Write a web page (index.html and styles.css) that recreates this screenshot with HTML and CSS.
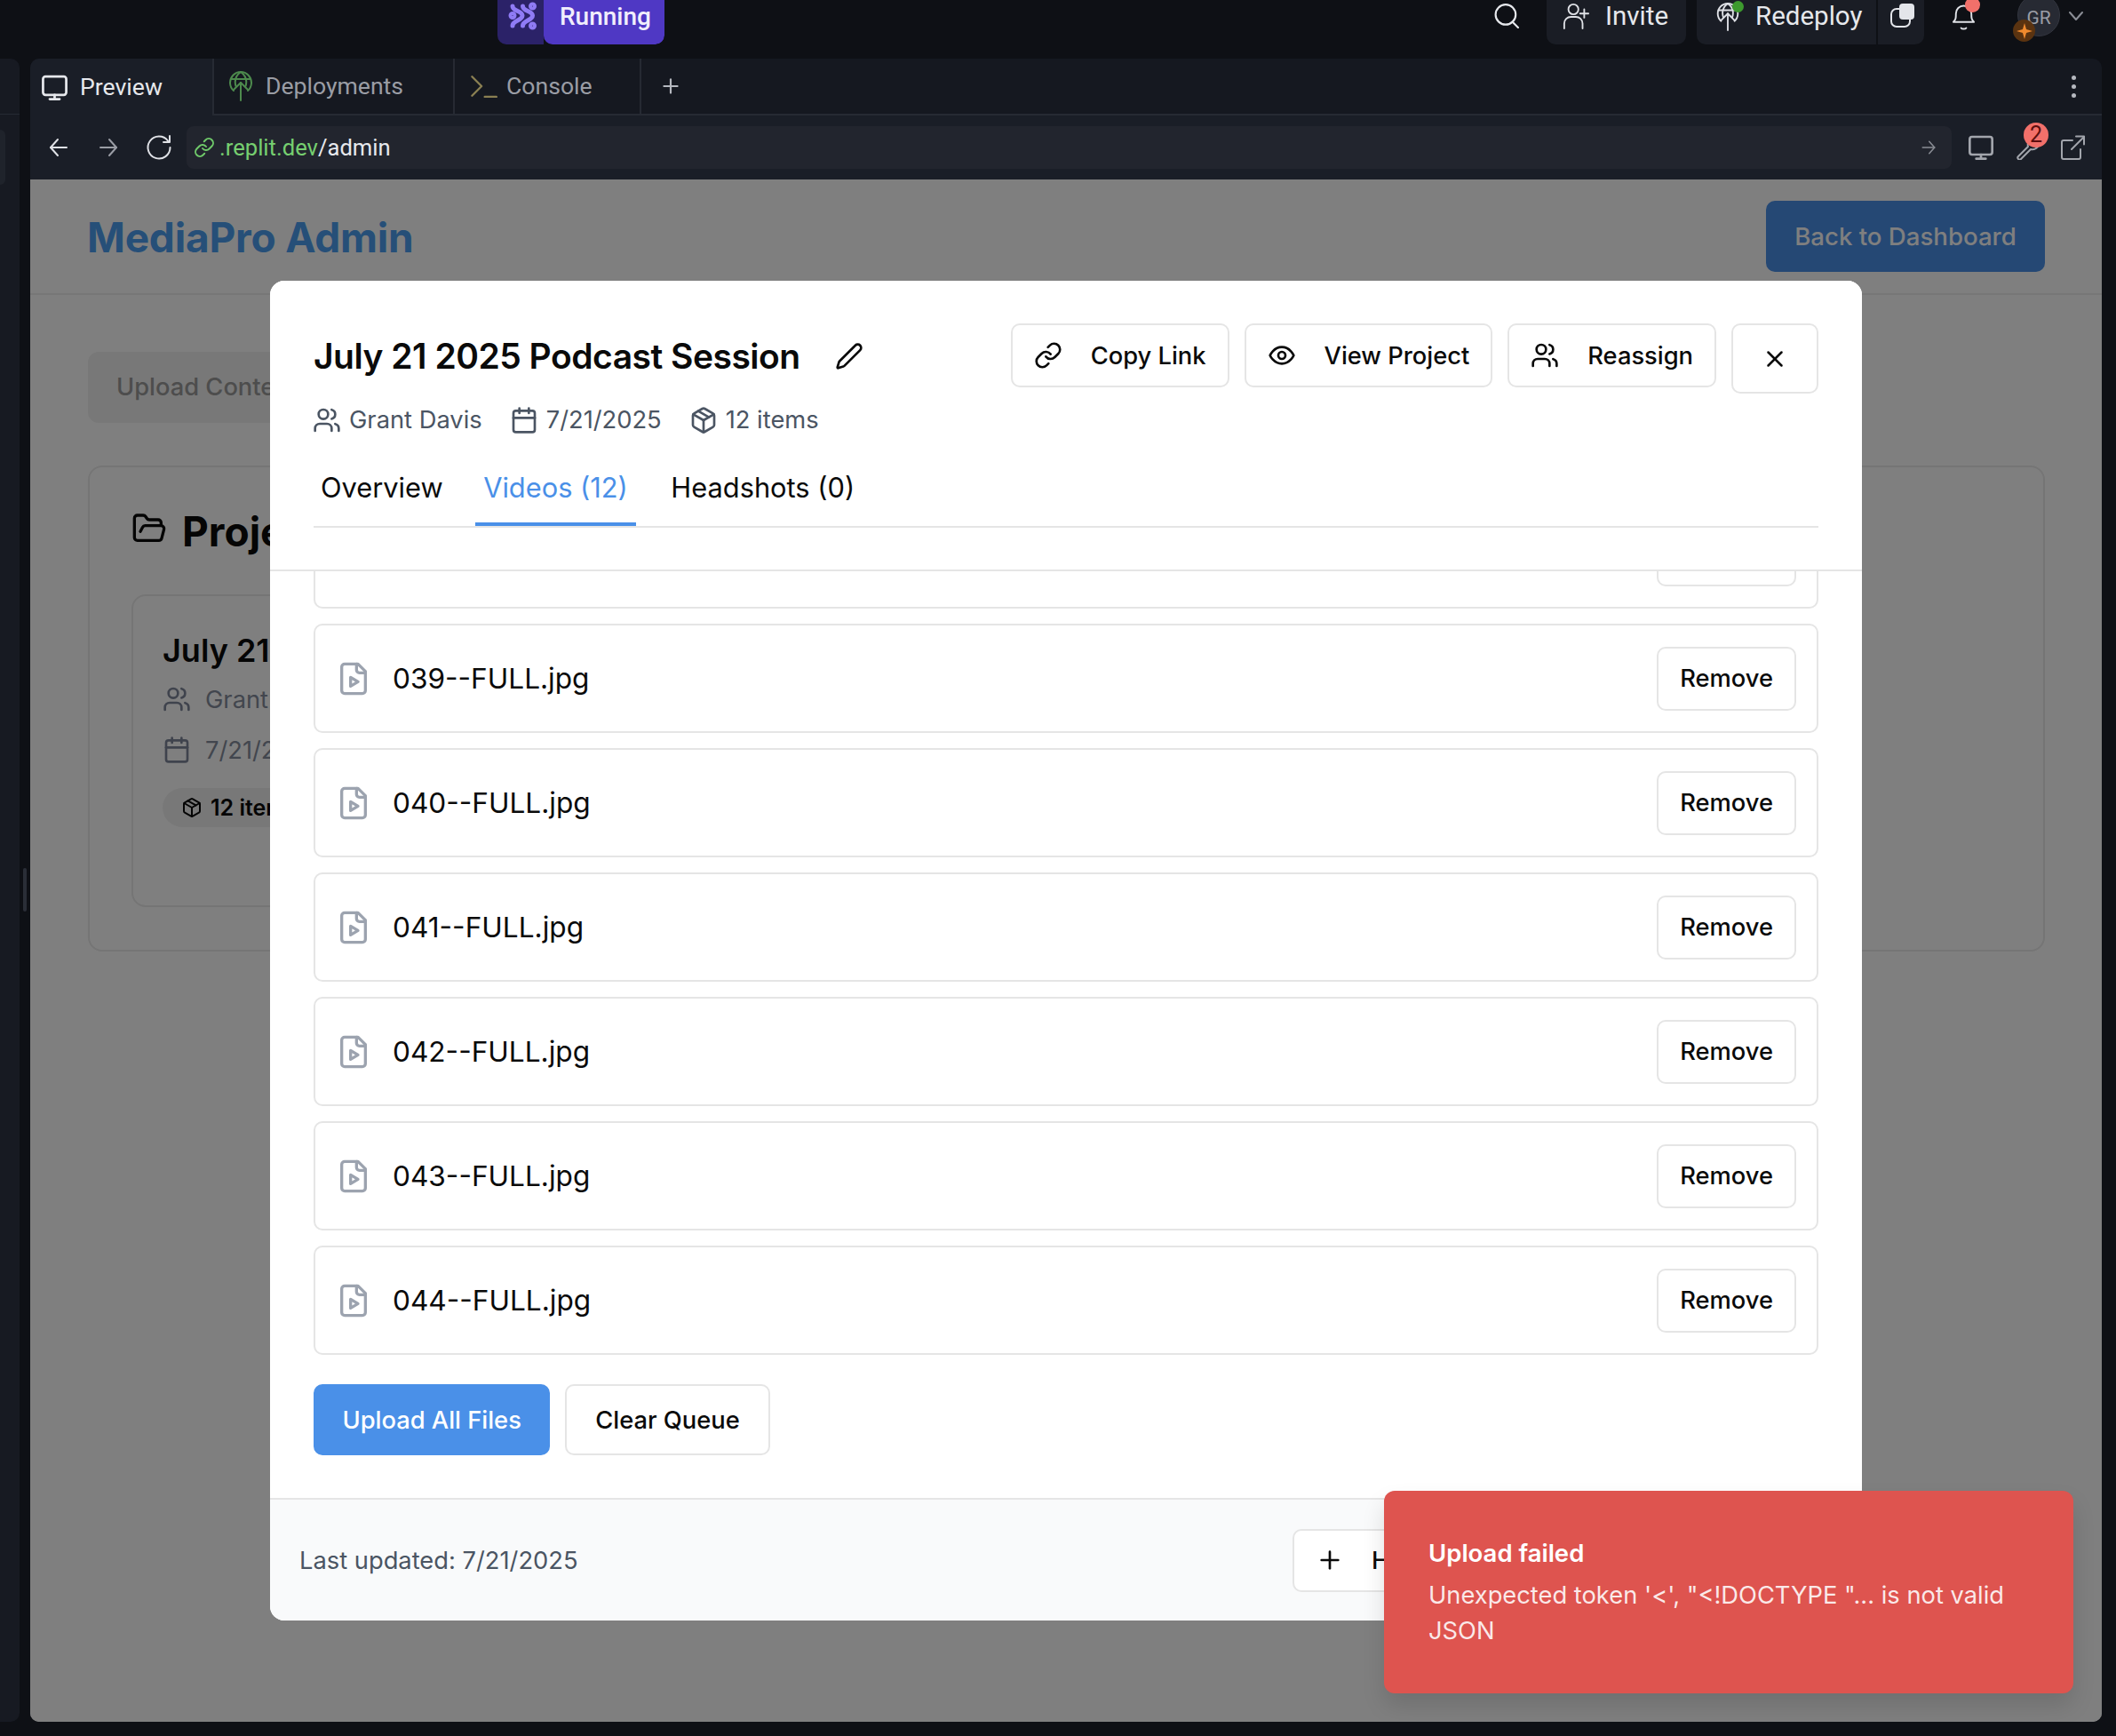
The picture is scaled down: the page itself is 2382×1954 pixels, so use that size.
FILE: index.html
```html
<!DOCTYPE html>
<html lang="en">
  <head>
    <meta charset="utf-8" />
    <title>MediaPro Admin</title>
    <link rel="stylesheet" href="styles.css">
  </head>
  <body>
    <!-- shared icons -->
    <svg class="sprite" xmlns="http://www.w3.org/2000/svg">
      <symbol id="i-users" viewBox="0 0 24 24"><path d="M16 21v-2a4 4 0 0 0-4-4H6a4 4 0 0 0-4 4v2"/><circle cx="9" cy="7" r="4"/><path d="M22 21v-2a4 4 0 0 0-3-3.87"/><path d="M16 3.13a4 4 0 0 1 0 7.75"/></symbol>
      <symbol id="i-calendar" viewBox="0 0 24 24"><path d="M8 2v4"/><path d="M16 2v4"/><rect width="18" height="18" x="3" y="4" rx="2"/><path d="M3 10h18"/></symbol>
      <symbol id="i-package" viewBox="0 0 24 24"><path d="m7.5 4.27 9 5.15"/><path d="M21 8a2 2 0 0 0-1-1.73l-7-4a2 2 0 0 0-2 0l-7 4A2 2 0 0 0 3 8v8a2 2 0 0 0 1 1.73l7 4a2 2 0 0 0 2 0l7-4A2 2 0 0 0 21 16Z"/><path d="m3.3 7 8.7 5 8.7-5"/><path d="M12 22V12"/></symbol>
      <symbol id="i-pencil" viewBox="0 0 24 24"><path d="M21.174 6.812a1 1 0 0 0-3.986-3.987L3.842 16.174a2 2 0 0 0-.5.83l-1.321 4.352a.5.5 0 0 0 .623.622l4.353-1.32a2 2 0 0 0 .83-.497z"/></symbol>
      <symbol id="i-link" viewBox="0 0 24 24"><path d="M10 13a5 5 0 0 0 7.54.54l3-3a5 5 0 0 0-7.07-7.07l-1.72 1.71"/><path d="M14 11a5 5 0 0 0-7.54-.54l-3 3a5 5 0 0 0 7.07 7.07l1.71-1.71"/></symbol>
      <symbol id="i-eye" viewBox="0 0 24 24"><path d="M2 12s3-7 10-7 10 7 10 7-3 7-10 7-10-7-10-7Z"/><circle cx="12" cy="12" r="3"/></symbol>
      <symbol id="i-x" viewBox="0 0 24 24"><path d="M18 6 6 18"/><path d="m6 6 12 12"/></symbol>
      <symbol id="i-plus" viewBox="0 0 24 24"><path d="M5 12h14"/><path d="M12 5v14"/></symbol>
      <symbol id="i-file" viewBox="0 0 24 24"><path d="M15 2H6a2 2 0 0 0-2 2v16a2 2 0 0 0 2 2h12a2 2 0 0 0 2-2V7Z"/><path d="M14 2v4a2 2 0 0 0 2 2h4"/><path d="m10 11 5 3-5 3v-6Z"/></symbol>
      <symbol id="i-folder" viewBox="0 0 24 24"><path d="m6 14 1.5-2.9A2 2 0 0 1 9.24 10H20a2 2 0 0 1 1.94 2.5l-1.54 6a2 2 0 0 1-1.95 1.5H4a2 2 0 0 1-2-2V5a2 2 0 0 1 2-2h3.9a2 2 0 0 1 1.69.9l.81 1.2a2 2 0 0 0 1.67.9H18a2 2 0 0 1 2 2v2"/></symbol>
      <symbol id="i-monitor" viewBox="0 0 24 24"><rect x="2.500" y="3" width="19" height="15" rx="2"/><path d="M12 18v3.500"/><path d="M8 21.500h8"/></symbol>
      <symbol id="i-globe" viewBox="0 0 26 34"><path d="M5 22A12 12 0 1 1 21 22"/><path d="M2 9h22"/><path d="M13 1C6 6 6 12 7.500 17"/><path d="M13 1c7 5 7 11 5.500 16"/><path d="M13 33V13"/><path d="M5.500 20.500 13 13l7.500 7.500"/></symbol>
      <symbol id="i-arrow" viewBox="0 0 24 24"><path d="M3 12h18"/><path d="m13 3 8 9-8 9"/></symbol>
    </svg>

    <div class="topbar">
      <div class="run-pill">
        <span class="run-logo">
          <svg class="logo" viewBox="0 0 32 36" width="32" height="36">
            <path d="M5 7c0 6 11 5 11 10.500S5 23 5 29"/>
            <path d="M16.500 7c0 6 11 5 11 10.500s-11 5.500-11 11.500"/>
            <circle cx="27.500" cy="7" r="2"/>
            <circle cx="5" cy="17.500" r="2"/>
            <circle cx="27.500" cy="29" r="2"/>
          </svg>
        </span>
        <span class="run-label">Running</span>
      </div>
      <div class="top-right">
        <svg class="top-search" viewBox="0 0 26 26"><circle cx="12" cy="11.500" r="10.500"/><path d="m19 19 6 6"/></svg>
        <div class="top-btn invite">
          <svg class="top-ico" viewBox="0 0 32 32"><circle cx="13" cy="8" r="6"/><path d="M2 31v-6a8 8 0 0 1 8-8h6a8 8 0 0 1 8 8v6"/><path d="M26 8v10"/><path d="M21 13h10"/></svg>
          <span>Invite</span>
        </div>
        <div class="top-btn redeploy">
          <span class="dot-wrap">
            <svg class="top-ico globe"><use href="#i-globe"/></svg>
            <span class="dot-green"></span>
          </span>
          <span>Redeploy</span>
        </div>
        <div class="top-btn copy">
          <svg viewBox="0 0 27 27" width="27" height="27"><rect x="1" y="6" width="21" height="20" rx="6" stroke="#e3e5ea"/><rect x="10" y="0" width="17" height="18" rx="4" fill="#e3e5ea" stroke="none"/></svg>
        </div>
        <span class="bell-wrap">
          <svg class="top-ico bell" viewBox="0 0 28 32"><path d="M2 23c3-3 3-5 3-10a9 9 0 0 1 18 0c0 5 0 7 3 10z"/><path d="M11 30c1 1.500 5 1.500 6 0"/></svg>
          <span class="dot-red"></span>
        </span>
        <span class="avatar">
          GR
          <span class="spark">
            <svg viewBox="0 0 16 16" width="18" height="18"><path fill="#f08a2e" stroke="none" d="M8 0l1.800 6.200L16 8l-6.200 1.800L8 16 6.200 9.800 0 8l6.200-1.800z"/></svg>
          </span>
        </span>
        <svg class="chev" viewBox="0 0 16 10"><path d="M1 1l7 8 7-8"/></svg>
      </div>
    </div>

    <div class="workspace">
      <div class="rail">
        <div class="rail-line"></div>
        <div class="rail-chip"></div>
        <div class="rail-handle"></div>
      </div>
      <div class="panel">
        <div class="tabs-bar">
          <div class="ptab active">
            <svg class="ptab-ico"><use href="#i-monitor"/></svg>
            <span>Preview</span>
          </div>
          <div class="ptab deploy">
            <svg class="ptab-ico green"><use href="#i-globe"/></svg>
            <span>Deployments</span>
          </div>
          <div class="ptab console">
            <svg class="ptab-ico term" viewBox="0 0 26 24"><path class="gold" d="M2 3l9 9-9 9"/><path class="gold" d="M14 22h11"/></svg>
            <span>Console</span>
          </div>
          <div class="ptab-add"><svg class="ptab-plus"><use href="#i-plus"/></svg></div>
          <div class="kebab"><i></i><i></i><i></i></div>
        </div>

        <div class="address-row">
          <svg class="nav-ico"><use href="#i-arrow" transform="rotate(180 12 12)"/></svg>
          <svg class="nav-ico dim"><use href="#i-arrow"/></svg>
          <svg class="nav-ico reload" viewBox="0 0 30 30"><path d="M25 7.500A12.500 12.500 0 1 0 27.500 15"/><path d="M27 2v7h-7"/></svg>
          <div class="address">
            <svg class="addr-link"><use href="#i-link"/></svg>
            <span class="addr-host">.replit.dev</span><span class="addr-path">/admin</span>
            <svg class="addr-go"><use href="#i-arrow"/></svg>
          </div>
          <svg class="nav-ico monitor"><use href="#i-monitor"/></svg>
          <span class="wrench">
            <svg class="nav-ico small" viewBox="0 0 28 28"><path d="M20 4a7 7 0 0 0-7 9L2 24a2 2 0 0 0 3 3l11-11a7 7 0 0 0 9-7"/></svg>
            <span class="wrench-badge">2</span>
          </span>
          <svg class="nav-ico small" viewBox="0 0 28 28"><path d="M14 6H4a2 2 0 0 0-2 2v17a2 2 0 0 0 2 2h17a2 2 0 0 0 2-2v-9"/><path d="M13 16 27 2"/><path d="M18 1.500h9v9"/></svg>
        </div>

        <div class="preview">
          <header class="page-head">
            <h1>MediaPro Admin</h1>
            <button class="back-btn">Back to Dashboard</button>
          </header>
          <div class="page-body">
            <div class="upload-tab">Upload Content</div>
            <section class="projects">
              <h2><svg class="folder"><use href="#i-folder"/></svg>Projects</h2>
              <div class="proj-card">
                <h3>July 21 2025 Podcast Session</h3>
                <div class="proj-line"><svg><use href="#i-users"/></svg>Grant Davis</div>
                <div class="proj-line"><svg><use href="#i-calendar"/></svg>7/21/2025</div>
                <div class="proj-badge"><svg><use href="#i-package"/></svg>12 items</div>
              </div>
            </section>
          </div>

          <div class="overlay"></div>

          <div class="modal">
            <div class="modal-head">
              <div class="head-top">
                <div class="head-left">
                  <div class="title-row">
                    <h2 class="modal-title">July 21 2025 Podcast Session</h2>
                    <svg class="ico pencil"><use href="#i-pencil"/></svg>
                  </div>
                  <div class="meta">
                    <span class="meta-item"><svg class="ico"><use href="#i-users"/></svg>Grant Davis</span>
                    <span class="meta-item"><svg class="ico"><use href="#i-calendar"/></svg>7/21/2025</span>
                    <span class="meta-item"><svg class="ico"><use href="#i-package"/></svg>12 items</span>
                  </div>
                </div>
                <div class="head-actions">
                  <button class="btn with-ico"><svg class="ico"><use href="#i-link"/></svg>Copy Link</button>
                  <button class="btn with-ico"><svg class="ico"><use href="#i-eye"/></svg>View Project</button>
                  <button class="btn with-ico"><svg class="ico"><use href="#i-users"/></svg>Reassign</button>
                  <button class="btn close"><svg class="ico"><use href="#i-x"/></svg></button>
                </div>
              </div>
              <div class="tabs">
                <div class="tab">Overview</div>
                <div class="tab selected">Videos (12)</div>
                <div class="tab">Headshots (0)</div>
              </div>
            </div>

            <div class="modal-body">
              <div class="file-row"><svg class="file-ico"><use href="#i-file"/></svg><span class="file-name">038--FULL.jpg</span><button class="btn remove">Remove</button></div>
              <div class="file-row"><svg class="file-ico"><use href="#i-file"/></svg><span class="file-name">039--FULL.jpg</span><button class="btn remove">Remove</button></div>
              <div class="file-row"><svg class="file-ico"><use href="#i-file"/></svg><span class="file-name">040--FULL.jpg</span><button class="btn remove">Remove</button></div>
              <div class="file-row"><svg class="file-ico"><use href="#i-file"/></svg><span class="file-name">041--FULL.jpg</span><button class="btn remove">Remove</button></div>
              <div class="file-row"><svg class="file-ico"><use href="#i-file"/></svg><span class="file-name">042--FULL.jpg</span><button class="btn remove">Remove</button></div>
              <div class="file-row"><svg class="file-ico"><use href="#i-file"/></svg><span class="file-name">043--FULL.jpg</span><button class="btn remove">Remove</button></div>
              <div class="file-row"><svg class="file-ico"><use href="#i-file"/></svg><span class="file-name">044--FULL.jpg</span><button class="btn remove">Remove</button></div>
              <div class="queue-actions">
                <button class="btn primary">Upload All Files</button>
                <button class="btn clear">Clear Queue</button>
              </div>
            </div>

            <div class="modal-foot">
              <span class="updated">Last updated: 7/21/2025</span>
              <button class="btn add"><svg class="ico"><use href="#i-plus"/></svg>Hide Upload</button>
            </div>
          </div>

          <div class="toast">
            <div class="toast-title">Upload failed</div>
            <div class="toast-msg">Unexpected token '&lt;', "&lt;!DOCTYPE "... is not valid JSON</div>
          </div>
        </div>
      </div>
    </div>
  </body>
</html>
```

FILE: styles.css
```css
*{
    box-sizing: border-box;
}

html, body{
    margin: 0;
    width: 2382px;
    height: 1954px;
    overflow: hidden;
}

body{
    background-color: #0e1015;
    font-family: "Inter", "Liberation Sans", sans-serif;
    color: #0a0a0a;
}

.sprite{
    display: none;
}

svg{
    fill: none;
    stroke: currentColor;
    stroke-width: 2;
    stroke-linecap: round;
    stroke-linejoin: round;
    flex-shrink: 0;
}

button{
    font-family: inherit;
}

/* top bar of the editor */
.topbar{
    height: 66px;
    display: flex;
    align-items: flex-start;
    padding-left: 560px;
    font-family: "Roboto", "Liberation Sans", sans-serif;
    color: #e6e8ec;
    font-size: 29.500px;
}

.run-pill{
    display: flex;
    height: 50px;
    width: 188px;
    border-radius: 0 0 10px 10px;
    overflow: hidden;
}

.run-logo{
    width: 52px;
    background-color: #2b2268;
    padding-left: 12px;
}

.logo{
    stroke: #8f7bf5;
}

.logo path{
    stroke-width: 5;
}

.logo circle{
    stroke-width: 5;
}

.run-label{
    flex: 1;
    background-color: #4f38c4;
    border-radius: 0 0 10px 10px;
    padding: 2px 0 0 18px;
    color: #f1eefc;
    font-weight: 500;
    font-size: 28px;
}

.top-right{
    margin-left: auto;
    display: flex;
    align-items: flex-start;
    width: 698px;
}

.top-search{
    width: 28px;
    height: 28px;
    margin-top: 4px;
    margin-left: -2px;
    margin-right: 31px;
    color: #e6e8ec;
}

.top-btn{
    height: 50px;
    display: flex;
    align-items: center;
    padding-bottom: 14px;
    background-color: #1a1d25;
    border-radius: 0 0 10px 10px;
}

.top-ico{
    width: 30px;
    height: 32px;
    color: #dfe1e6;
}

.globe{
    width: 26px;
    height: 32px;
    margin-top: 2px;
}

.invite{
    width: 157px;
    padding-left: 18px;
    gap: 18px;
    margin-right: 12px;
}

.redeploy{
    width: 202px;
    padding-left: 22px;
    gap: 18px;
    border-radius: 0 0 0 10px;
    margin-right: 2px;
}

.dot-wrap{
    position: relative;
    display: flex;
}

.dot-green{
    position: absolute;
    right: -5px;
    top: 0;
    width: 13px;
    height: 13px;
    border-radius: 50%;
    background-color: #3d9a2e;
}

.copy{
    width: 52px;
    padding: 4px 0 0 14px;
    align-items: flex-start;
    border-radius: 0 0 10px 0;
    margin-right: 31px;
}

.bell-wrap{
    position: relative;
    display: flex;
    margin-top: 2px;
    margin-right: 47px;
}

.bell{
    width: 27px;
    height: 32px;
}

.dot-red{
    position: absolute;
    right: -5px;
    top: -5px;
    width: 17px;
    height: 17px;
    border-radius: 50%;
    background-color: #f2706a;
}

.avatar{
    position: relative;
    width: 48px;
    height: 48px;
    margin-top: -7px;
    border-radius: 50%;
    background-color: #272a33;
    border: 1px solid #33363f;
    color: #9a9da5;
    font-size: 21px;
    display: flex;
    align-items: center;
    justify-content: center;
    padding-top: 6px;
    margin-right: 10px;
}

.spark{
    position: absolute;
    left: -6px;
    bottom: -7px;
    width: 25px;
    height: 25px;
    border-radius: 50%;
    background-color: #5a3310;
    display: flex;
    align-items: center;
    justify-content: center;
}

.chev{
    width: 16px;
    height: 10px;
    margin-top: 13px;
    color: #8a8d95;
}

/* below the top bar */
.workspace{
    display: flex;
    height: 1872px;
}

.rail{
    position: relative;
    width: 22px;
    background-color: #171a22;
    border-radius: 0 10px 10px 0;
    margin-right: 12px;
}

.rail-line{
    height: 63px;
    border-bottom: 1px solid #262a33;
}

.rail-chip{
    width: 6px;
    height: 62px;
    margin-top: 17px;
    background-color: #1f232b;
    border-radius: 0 6px 6px 0;
}

.rail-handle{
    position: absolute;
    left: 26px;
    top: 911px;
    width: 4px;
    height: 49px;
    border-radius: 2px;
    background-color: #2a2e37;
}

.panel{
    width: 2332px;
    display: flex;
    flex-direction: column;
    border-radius: 10px;
    overflow: hidden;
    font-family: "Roboto", "Liberation Sans", sans-serif;
}

.tabs-bar{
    height: 64px;
    display: flex;
    background-color: #151820;
    border-bottom: 2px solid #262a33;
    font-size: 26.600px;
    color: #9a9da5;
    line-height: 66px;
}

.ptab{
    display: flex;
    align-items: center;
    border-right: 2px solid #262a33;
}

.ptab.active{
    width: 207px;
    height: 64px;
    padding-left: 11px;
    gap: 12px;
    background-color: #1a1e27;
    color: #e6e8ec;
}

.deploy{
    width: 271px;
    padding-left: 17px;
    gap: 15px;
}

.console{
    width: 210px;
    padding-left: 17px;
    gap: 10px;
}

.ptab-ico{
    width: 33px;
    height: 33px;
    color: #e6e8ec;
}

.ptab-ico.green{
    width: 26px;
    height: 34px;
    color: #4d8a4d;
}

.ptab-ico.term{
    width: 31px;
    height: 32px;
}

.gold{
    stroke: #8a7f52;
}

.ptab-add{
    display: flex;
    align-items: center;
    padding-left: 20px;
}

.ptab-plus{
    width: 26px;
    height: 26px;
    color: #b5b8bf;
}

.kebab{
    margin-left: auto;
    margin-right: 29px;
    display: flex;
    flex-direction: column;
    justify-content: center;
    gap: 5px;
}

.kebab i{
    display: block;
    width: 5px;
    height: 5px;
    border-radius: 50%;
    background-color: #b5b8bf;
}

.address-row{
    height: 72px;
    display: flex;
    align-items: center;
    background-color: #1a1e27;
    padding: 0 15px 0 20px;
    color: #e6e8ec;
}

.nav-ico{
    width: 24px;
    height: 24px;
    margin-right: 32px;
    color: #dfe1e6;
}

.nav-ico.dim{
    color: #9a9da5;
    margin-right: 30px;
}

.nav-ico.reload{
    width: 30px;
    height: 30px;
    margin-right: 16px;
}

.nav-ico.small{
    width: 28px;
    height: 28px;
    margin: 0;
    color: #a2a5ac;
}

.nav-ico.monitor{
    width: 32px;
    height: 32px;
    margin: 0;
    color: #a2a5ac;
}

.address{
    width: 1987px;
    height: 48px;
    background-color: #22252e;
    border-radius: 8px;
    display: flex;
    align-items: center;
    padding: 0 17px 0 8px;
    font-size: 25.600px;
    margin-right: 17px;
}

.addr-link{
    width: 24px;
    height: 24px;
    color: #6fc96a;
    margin-right: 5px;
}

.addr-host{
    color: #76cf70;
}

.addr-path{
    color: #e6e8ec;
}

.addr-go{
    width: 18px;
    height: 18px;
    margin-left: auto;
    color: #8a8d95;
}

.wrench{
    position: relative;
    display: flex;
    margin: 0 21px 0 24px;
}

.wrench-badge{
    position: absolute;
    right: -8px;
    top: -14px;
    width: 28px;
    height: 28px;
    border-radius: 50%;
    background-color: #f2706a;
    color: #5c0e0e;
    font-size: 25px;
    text-align: center;
    line-height: 28px;
}

/* the admin page under the dialog */
.preview{
    position: relative;
    flex: 1;
    background-color: #ffffff;
    font-family: "Inter", "Liberation Sans", sans-serif;
    overflow: hidden;
}

.page-head{
    height: 130px;
    border-bottom: 2px solid #eeeeee;
    display: flex;
    align-items: center;
    justify-content: space-between;
    padding: 0 64px;
}

.page-head h1{
    margin: 2px 0 0;
    font-size: 46px;
    font-weight: 700;
    letter-spacing: -0.2px;
    color: #4c9ef0;
}

.back-btn{
    width: 314px;
    height: 80px;
    border: none;
    border-radius: 10px;
    background-color: #4a90e8;
    color: #ffffff;
    font-size: 27.600px;
    font-weight: 500;
}

.page-body{
    padding: 64px 64px 0 65px;
}

.upload-tab{
    width: 400px;
    height: 80px;
    background-color: #f1f1f1;
    border-radius: 12px;
    padding: 0 32px;
    line-height: 80px;
    font-size: 27.300px;
    font-weight: 500;
    color: #9a9a9a;
}

.projects{
    margin-top: 48px;
    height: 547px;
    border: 2px solid #eaeaea;
    border-radius: 16px;
    padding: 46px 47px;
}

.projects h2{
    margin: 0;
    display: flex;
    align-items: center;
    gap: 17px;
    height: 52px;
    font-size: 46px;
    font-weight: 700;
}

.folder{
    width: 40px;
    height: 40px;
    margin-top: -6px;
}

.proj-card{
    margin-top: 45px;
    height: 352px;
    width: 900px;
    border: 2px solid #eaeaea;
    border-radius: 16px;
    padding: 37px 33px;
}

.proj-card h3{
    margin: 0 0 15px;
    font-size: 36px;
    font-weight: 600;
    line-height: 48px;
    white-space: nowrap;
}

.proj-line{
    display: flex;
    align-items: center;
    gap: 16px;
    height: 32px;
    margin-bottom: 25px;
    font-size: 27.300px;
    color: #858d9c;
}

.proj-line svg{
    width: 32px;
    height: 32px;
    color: #7f879a;
}

.proj-badge{
    display: flex;
    align-items: center;
    gap: 9px;
    width: 190px;
    height: 44px;
    margin-top: 27px;
    padding-left: 21px;
    background-color: #f1f1f1;
    border-radius: 22px;
    font-size: 25px;
    font-weight: 600;
}

.proj-badge svg{
    width: 24px;
    height: 24px;
}

.overlay{
    position: absolute;
    inset: 0;
    background-color: rgba(0, 0, 0, 0.5);
}

/* the dialog */
.modal{
    position: absolute;
    left: 270px;
    top: 114px;
    width: 1792px;
    height: 1508px;
    background-color: #ffffff;
    border-radius: 16px;
    overflow: hidden;
    display: flex;
    flex-direction: column;
}

.modal-head{
    position: relative;
    z-index: 1;
    background-color: #ffffff;
    height: 327px;
    padding: 48px 49px 0;
    border-bottom: 2px solid #e5e5e5;
}

.head-top{
    display: flex;
    justify-content: space-between;
    height: 132px;
}

.title-row{
    display: flex;
    align-items: center;
    margin-top: 9px;
    height: 56px;
}

.modal-title{
    margin: 0;
    font-size: 39px;
    font-weight: 600;
    letter-spacing: -0.5px;
    line-height: 56px;
}

.ico{
    width: 32px;
    height: 32px;
}

.pencil{
    margin-left: 39px;
}

.meta{
    display: flex;
    gap: 31px;
    margin-top: 27px;
    margin-left: -1px;
    font-size: 27.300px;
    color: #4b5563;
}

.meta-item{
    display: flex;
    align-items: center;
    gap: 9px;
}

.head-actions{
    display: flex;
    align-items: flex-start;
    gap: 17px;
}

.btn{
    height: 72px;
    background-color: #ffffff;
    border: 2px solid #e5e5e5;
    border-radius: 10px;
    font-size: 27.300px;
    font-weight: 500;
    color: #0a0a0a;
    display: flex;
    align-items: center;
}

.with-ico{
    padding: 0 24px;
    gap: 32px;
}

.close{
    width: 98px;
    height: 79px;
    justify-content: center;
}

.close .ico{
    width: 30px;
    height: 30px;
}

.tabs{
    display: flex;
    gap: 30.500px;
    margin-top: 10px;
    height: 88px;
    border-bottom: 2px solid #e5e5e5;
}

.tab{
    height: 86px;
    padding: 0 9px;
    line-height: 86px;
    font-size: 30.800px;
    font-weight: 400;
}

.tab:first-child{
    margin-left: -1px;
    margin-right: -3px;
}

.tab.selected{
    color: #4a90e8;
    border-bottom: 4px solid #4a90e8;
}

.modal-body{
    flex: 1;
    overflow: hidden;
    display: flex;
    flex-direction: column;
    justify-content: flex-end;
    padding: 0 49px 48px;
}

.file-row{
    flex-shrink: 0;
    height: 123px;
    margin-bottom: 17px;
    border: 2px solid #e5e5e5;
    border-radius: 10px;
    display: flex;
    align-items: center;
    padding: 0 23px 0 23px;
}

.file-row:nth-last-child(2){
    margin-bottom: 0;
}

.file-ico{
    width: 40px;
    height: 40px;
    color: #9ca3af;
    margin-right: 24px;
}

.file-name{
    font-size: 31.600px;
    font-weight: 400;
}

.remove{
    margin-left: auto;
    padding: 0 24px;
}

.queue-actions{
    flex-shrink: 0;
    display: flex;
    gap: 17px;
    margin-top: 33px;
}

.queue-actions .btn{
    height: 80px;
}

.primary{
    padding: 0 30.500px;
    background-color: #4a90e8;
    border-color: #4a90e8;
    color: #ffffff;
}

.clear{
    padding: 0 32px;
}

.modal-foot{
    height: 138px;
    flex-shrink: 0;
    background-color: #f9fafb;
    border-top: 2px solid #e5e5e5;
    display: flex;
    align-items: center;
    padding: 0 33px;
    font-size: 27.300px;
    color: #4b5563;
}

.add{
    margin-left: auto;
    width: 608px;
    height: 71px;
    padding: 0 24px;
    gap: 31px;
}

/* error toast */
.toast{
    position: absolute;
    left: 1524px;
    top: 1476px;
    width: 776px;
    height: 228px;
    padding: 50px;
    background-color: #de544f;
    border-radius: 12px;
    box-shadow: 0 14px 26px rgba(0, 0, 0, 0.12);
    color: #ffffff;
}

.toast-title{
    font-size: 27.500px;
    font-weight: 600;
    line-height: 40px;
}

.toast-msg{
    margin-top: 8px;
    font-size: 27.300px;
    line-height: 40px;
    color: rgba(255, 255, 255, 0.88);
}
```
